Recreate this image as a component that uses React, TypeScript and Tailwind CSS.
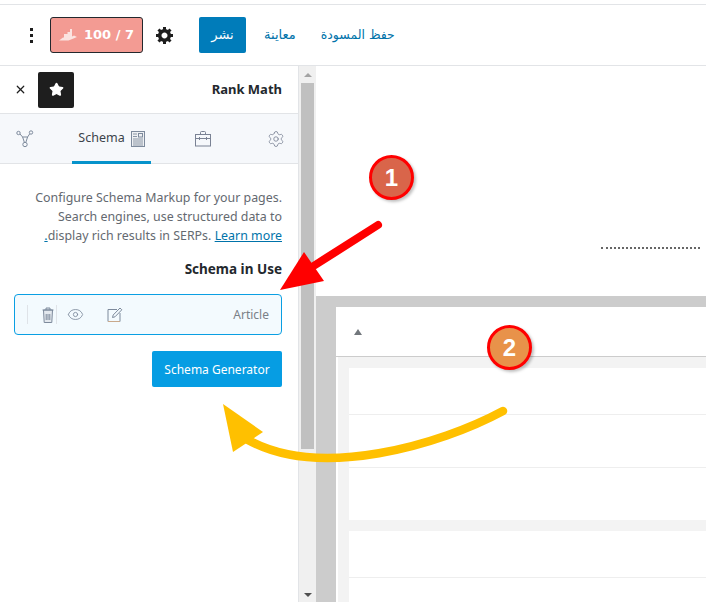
import { Eye, Settings, Star, X } from "lucide-react";

const sans = "font-['Noto_Sans','DejaVu_Sans',sans-serif]";

function GraphIcon() {
  return (
    <svg width="18" height="18" viewBox="0 0 18 18" fill="none" stroke="#7d8a9c" strokeWidth="1">
      <circle cx="2.5" cy="3" r="1.7" />
      <circle cx="15" cy="2.5" r="1.7" />
      <circle cx="9" cy="14.5" r="2.2" />
      <path d="M4 4l2.6 3h5l2-3M6.6 7l1.8 5.4M11.6 7l-1.8 5.4" />
    </svg>
  );
}

function SchemaIcon() {
  return (
    <svg width="14" height="16" viewBox="0 0 14 16" fill="#eef0f3" stroke="#7d8a9c" strokeWidth="1">
      <rect x="0.5" y="0.5" width="13" height="15" />
      <rect x="7.5" y="2.5" width="4" height="3.5" fill="none" />
      <path d="M2 3h4M2 5.500h4M2 8h10M2 10h10M2 12h10M2 14h10" strokeWidth="0.9" />
    </svg>
  );
}

function CaseIcon() {
  return (
    <svg width="16" height="16" viewBox="0 0 16 16" fill="none" stroke="#7a8294" strokeWidth="1">
      <rect x="0.5" y="3.500" width="15" height="11.500" />
      <path d="M5.500 3.500v-2q0-1 1-1h3q1 0 1 1v2M.5 7.500h15M4.500 6v3M11.500 6v3" />
    </svg>
  );
}

function TrashIcon() {
  return (
    <svg width="12" height="16" viewBox="0 0 12 16" fill="#e3e8ee" stroke="#7d8a9c" strokeWidth="1">
      <path d="M0.500 3h11M4 3V1h4v2M1.500 3l.7 12.500h7.600L10.500 3z" />
      <path d="M4.200 7v6M6 7v6M7.800 7v6" />
    </svg>
  );
}

function EditIcon() {
  return (
    <svg width="16" height="16" viewBox="0 0 16 16" fill="none" stroke="#7d8a9c" strokeWidth="1">
      <path d="M10 2.500H1v12h12V6" />
      <path d="M1 14.500h12" stroke="#c9a98c" />
      <path d="M5.500 10.500l.7-2.500L13 1l1.800 1.800L8 9.800z" />
    </svg>
  );
}

function GearSolid() {
  return (
    <svg width="20" height="20" viewBox="0 0 20 20" fill="#1e1e1e">
      <path d="M18 12h-2.180c-.17.7-.44 1.350-.81 1.930l1.540 1.540-2.100 2.100-1.540-1.540c-.58.36-1.230.63-1.910.79V19H8v-2.180c-.68-.16-1.330-.43-1.910-.79l-1.540 1.540-2.120-2.120 1.540-1.540c-.36-.58-.63-1.230-.79-1.910H1V9.030h2.170c.16-.7.44-1.350.8-1.940L2.430 5.550l2.100-2.100 1.540 1.540c.58-.37 1.240-.64 1.930-.81V2h3v2.180c.68.16 1.330.43 1.910.79l1.540-1.540 2.120 2.120-1.540 1.540c.36.59.64 1.240.8 1.940H18V12zm-8.500 1.500c1.660 0 3-1.340 3-3s-1.340-3-3-3-3 1.340-3 3 1.340 3 3 3z" />
    </svg>
  );
}

function ScoreIcon() {
  return (
    <svg width="18" height="12" viewBox="0 0 18 12" fill="#fbe3e0">
      <path d="M0 11.500l4-3h1V5h3.500V3H11V0h2v7.500l2-1 3 1.500-3.500 1.500-5 2z" />
    </svg>
  );
}

function Badge({ n, className }: { n: string; className: string }) {
  return (
    <div
      className={`absolute flex h-[45px] w-[45px] items-center justify-center rounded-full border-[3px] border-[#ff0000] font-['Liberation_Sans',sans-serif] text-[24px] font-bold text-white shadow-[2px_2px_3px_rgba(0,0,0,0.25)] ${className}`}
    >
      {n}
    </div>
  );
}

export default function App() {
  return (
    <div className={`relative flex h-[602px] w-[706px] flex-col overflow-hidden bg-white ${sans}`}>
      <div className="h-[5px] shrink-0 border-b border-[#e2e4e7]" />

      {/* editor toolbar */}
      <div className="flex h-[61px] shrink-0 items-center border-b border-[#e2e4e7]">
        <div className="flex w-[50px] justify-end pr-[17px]">
          <div className="flex flex-col gap-[3px]">
            <span className="h-[3px] w-[3px] bg-[#1e1e1e]" />
            <span className="h-[3px] w-[3px] bg-[#1e1e1e]" />
            <span className="h-[3px] w-[3px] bg-[#1e1e1e]" />
          </div>
        </div>
        <div className="flex h-[36px] w-[93px] items-center justify-center gap-[7px] rounded-[3px] border border-[#23282d] bg-[#f39b93] font-['DejaVu_Sans',sans-serif] text-[13px] font-bold text-white">
          <ScoreIcon />
          <span>100 / 7</span>
        </div>
        <div className="ml-[12px] flex w-[20px] justify-center">
          <GearSolid />
        </div>
        <div className="ml-[24px] flex h-[36px] w-[47px] items-center justify-center rounded-[2px] bg-[#007cba] font-['DejaVu_Sans',sans-serif] text-[13px] text-white">
          نشر
        </div>
        <div className="ml-[18px] font-['DejaVu_Sans',sans-serif] text-[13px] text-[#0073aa]">معاينة</div>
        <div className="ml-[25px] font-['DejaVu_Sans',sans-serif] text-[12.5px] text-[#0073aa]">حفظ المسودة</div>
      </div>

      <div className="flex min-h-0 flex-1">
        {/* rank math sidebar */}
        <aside className="w-[299px] shrink-0 border-r border-[#e2e4e7]">
          <div className="flex h-[48px] items-center border-b border-[#e2e4e7] pl-[14px] pr-[16px]">
            <X size={13} strokeWidth={2.2} className="text-[#1e1e1e]" />
            <div className="ml-[11px] flex h-[36px] w-[36px] items-center justify-center rounded-[2px] bg-[#1e1e1e]">
              <Star size={15} fill="white" stroke="white" />
            </div>
            <div className="ml-auto pt-[1px] text-[13px] font-bold text-[#23282d]">Rank Math</div>
          </div>
          <div className="flex h-[50px] items-center border-b border-[#e2e4e7] bg-[#f6f8fb]">
            <div className="flex w-[72px] justify-center pr-[22px]">
              <GraphIcon />
            </div>
            <div className="flex h-[50px] w-[79px] items-center justify-center gap-[6px] border-b-[3px] border-[#0693cb] pt-[3px] text-[12.5px] text-[#3c434a]">
              <span>Schema</span>
              <SchemaIcon />
            </div>
            <div className="ml-[44px] flex w-[16px]">
              <CaseIcon />
            </div>
            <div className="ml-[56px]">
              <Settings size={18} strokeWidth={1.1} className="text-[#7a8294]" />
            </div>
          </div>
          <div className="pl-[14px] pr-[16px] pt-[24px]">
            <p dir="rtl" className="text-[12.4px] leading-[19px] text-[#646970]">
              Configure Schema Markup for your pages. Search engines, use structured data to display rich results in SERPs.{" "}
              <a className="text-[#0073aa] underline">Learn more.</a>
            </p>
            <h3 dir="rtl" className="mt-[15px] text-[13.5px] font-bold leading-[19px] text-[#23282d]">
              Schema in Use
            </h3>
            <div className="mt-[15px] flex h-[41px] items-center rounded-[4px] border border-[#0a9fe3] bg-[#f3fafe] pl-[12px] pr-[12px]">
              <span className="h-[19px] w-[1px] bg-[#dfe3e8]" />
              <span className="ml-[14px]">
                <TrashIcon />
              </span>
              <span className="ml-[2px] h-[19px] w-[1px] bg-[#dfe3e8]" />
              <Eye size={17} strokeWidth={1.2} className="ml-[10px] text-[#7d8a9c]" />
              <span className="ml-[23px]">
                <EditIcon />
              </span>
              <span className="ml-auto text-[12px] text-[#7a8087]">Article</span>
            </div>
            <div className="mt-[16px] flex justify-end">
              <div className="flex h-[36px] w-[130px] items-center justify-center rounded-[2px] bg-[#069de3] pt-[1px] text-[12px] text-white">
                Schema Generator
              </div>
            </div>
          </div>
        </aside>

        {/* scrollbar */}
        <div className="flex w-[17px] shrink-0 flex-col items-center bg-[#f0f0f0]">
          <div className="mt-[7px] h-0 w-0 border-x-[4px] border-b-[4px] border-x-transparent border-b-[#a3a3a3]" />
          <div className="mt-[6px] h-[366px] w-[13px] bg-[#c0c0c0]" />
          <div className="mt-auto mb-[5px] h-0 w-0 border-x-[4px] border-t-[4px] border-x-transparent border-t-[#505050]" />
        </div>

        {/* editor canvas */}
        <main className="flex min-w-0 flex-1 flex-col">
          <div className="flex h-[230px] shrink-0 justify-end pr-[6px] pt-[181px]">
            <div className="h-0 w-[99px] border-t-2 border-dotted border-[#666]" />
          </div>
          <div className="flex flex-1 flex-col bg-[#cccccc] pl-[20px] pt-[11px]">
            <div className="flex flex-1 flex-col bg-white">
              <div className="flex h-[50px] shrink-0 items-center border-b border-[#cccccc] pl-[18px]">
                <div className="h-0 w-0 border-x-[4px] border-b-[6px] border-x-transparent border-b-[#72777c]" />
              </div>
              <div className="ml-[2px] flex flex-1 flex-col bg-[#f3f3f3] pl-[11px] pt-[11px]">
                <div className="h-[47px] border-b border-[#eeeeee] bg-white" />
                <div className="h-[53px] border-b border-[#eeeeee] bg-white" />
                <div className="h-[52px] bg-white" />
                <div className="mt-[11px] h-[47px] border-b border-[#eeeeee] bg-white" />
                <div className="flex-1 bg-white" />
              </div>
            </div>
          </div>
        </main>
      </div>

      {/* annotations over the screenshot */}
      <svg className="absolute left-0 top-0" width="706" height="602" viewBox="0 0 706 602" fill="none">
        <path d="M378 225L312 267" stroke="#ff0000" strokeWidth="8" strokeLinecap="round" />
        <path d="M280 290L304 252L324 281z" fill="#ff0000" />
        <path d="M503 411C440 445 320 480 248 440" stroke="#ffc000" strokeWidth="8.5" strokeLinecap="round" />
        <path d="M223 404L263 432L233 452z" fill="#ffc000" />
      </svg>
      <Badge n="1" className="left-[369px] top-[155px] bg-[#d9654a]" />
      <Badge n="2" className="left-[487px] top-[325px] bg-[#e8924a]" />
    </div>
  );
}
